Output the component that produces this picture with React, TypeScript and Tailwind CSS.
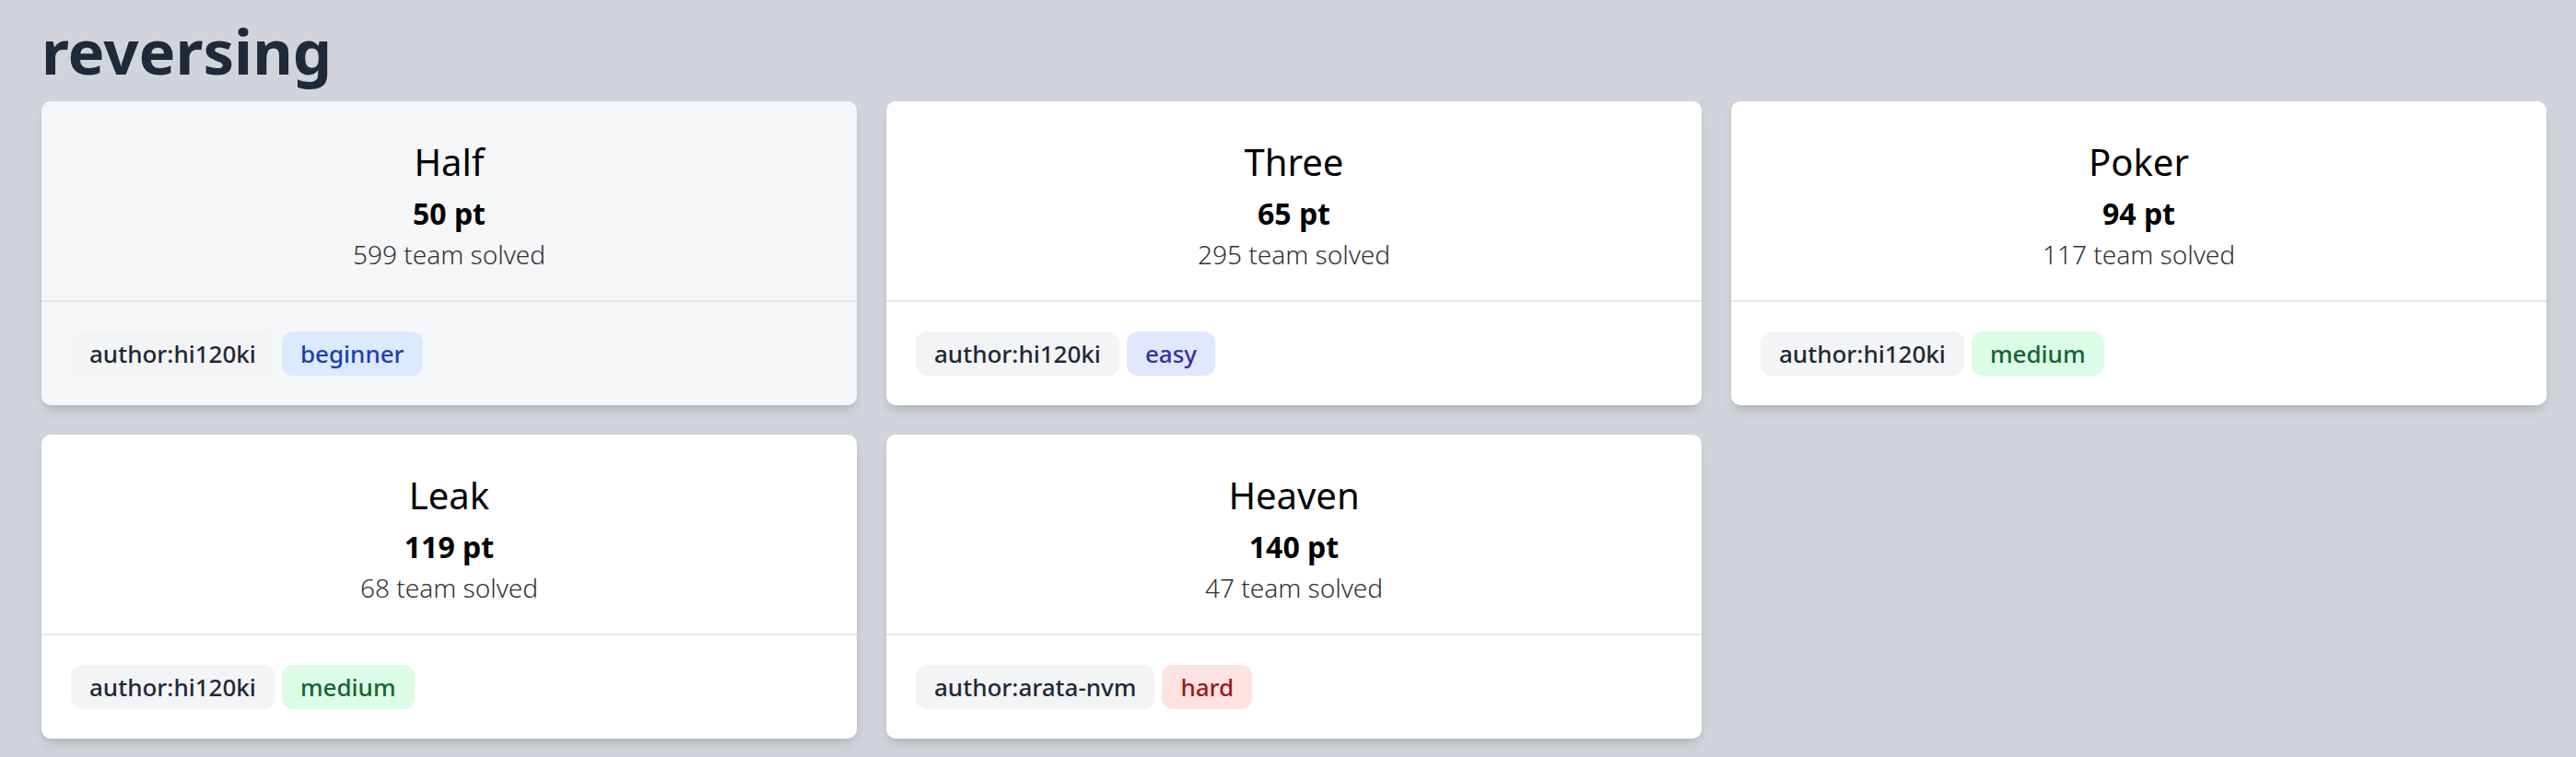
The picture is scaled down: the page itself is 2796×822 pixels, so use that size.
const challenges = [
  { name: 'Half', points: 50, solved: 599, author: 'hi120ki', level: 'beginner', active: true },
  { name: 'Three', points: 65, solved: 295, author: 'hi120ki', level: 'easy' },
  { name: 'Poker', points: 94, solved: 117, author: 'hi120ki', level: 'medium' },
  { name: 'Leak', points: 119, solved: 68, author: 'hi120ki', level: 'medium' },
  { name: 'Heaven', points: 140, solved: 47, author: 'arata-nvm', level: 'hard' },
]

const levelStyles: Record<string, string> = {
  beginner: 'bg-[#dbeafe] text-[#1e40af]',
  easy: 'bg-[#e0e7ff] text-[#3730a3]',
  medium: 'bg-[#dcfce7] text-[#166534]',
  hard: 'bg-[#fee2e2] text-[#991b1b]',
}

type Challenge = (typeof challenges)[number]

function Card({ c }: { c: Challenge }) {
  return (
    <div
      className={`flex flex-col rounded-[10px] shadow-[0_8px_14px_-3px_rgba(0,0,0,0.12),0_4px_8px_-4px_rgba(0,0,0,0.1)] ${
        c.active ? 'bg-[#f5f6f8]' : 'bg-white'
      }`}
    >
      <div className="flex flex-col items-center pt-[38px] pb-[30px] text-black">
        <h3 className="text-[40px] leading-[56px] font-normal">{c.name}</h3>
        <p className="mt-[4px] text-[32px] leading-[48px] font-bold">{c.points} pt</p>
        <p className="text-[28px] leading-[40px] font-light text-[#333]">{c.solved} team solved</p>
      </div>
      <div className="border-t-2 border-[#e5e7eb] p-8 flex gap-2">
        <span className="rounded-[12px] bg-[#f3f4f6] px-5 py-1 text-[26px] leading-[40px] font-medium text-[#1f2937]">
          author:{c.author}
        </span>
        <span className={`rounded-[12px] px-5 py-1 text-[26px] leading-[40px] font-medium ${levelStyles[c.level]}`}>
          {c.level}
        </span>
      </div>
    </div>
  )
}

export default function App() {
  return (
    <div
      className="min-h-screen bg-[#d1d5db] pl-[45px] pr-[32px] pt-[15px] pb-8"
      style={{ fontFamily: '"Noto Sans", "Open Sans", sans-serif' }}
    >
      <h1 className="text-[67px] leading-[80px] font-bold text-[#1f2937] mb-[15px]">reversing</h1>
      <div className="grid grid-cols-3 gap-8">
        {challenges.map((c) => (
          <Card key={c.name} c={c} />
        ))}
      </div>
    </div>
  )
}
